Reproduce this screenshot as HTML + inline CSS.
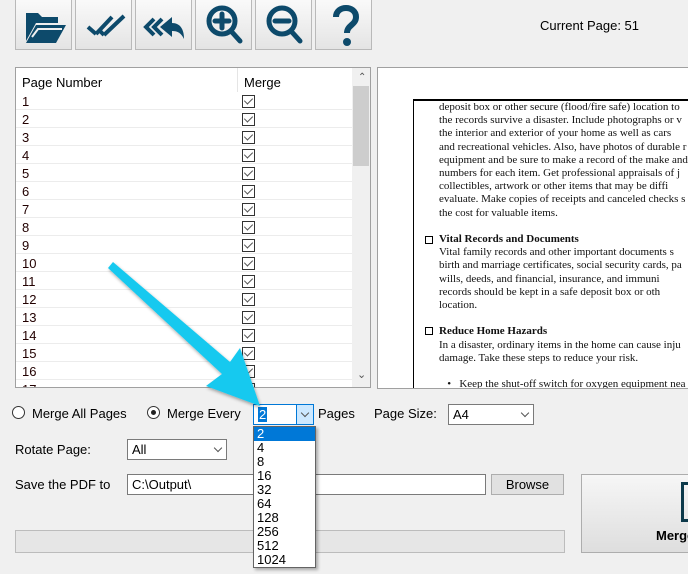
<!DOCTYPE html>
<html><head><style>
*{box-sizing:border-box;margin:0;padding:0}
body{width:688px;height:574px;overflow:hidden;background:#f0f0f0;font-family:"Liberation Sans",sans-serif;font-size:13px;color:#000;position:relative}
.a{position:absolute}
.tb{position:absolute;top:-2px;width:57px;height:52px;border:1px solid #b9b9b9;background:linear-gradient(#fafafa,#e4e4e4)}
.tb svg{position:absolute;left:6px;top:4px}
.list{left:15px;top:67px;width:356px;height:321px;background:#fff;border:1px solid #a0a0a0;overflow:hidden}
.row{position:absolute;left:0;width:336px;height:18px;border-bottom:1px solid #ececec;color:#200}
.row span{position:absolute;left:6px;top:2px}
.cb{position:absolute;left:226px;top:3px;width:13px;height:13px;border:1px solid #333;background:#fff}
.cb:after{content:"";position:absolute;left:3px;top:0px;width:4px;height:7px;border:solid #555;border-width:0 1.5px 1.5px 0;transform:rotate(45deg)}
.combo{position:absolute;height:21px;background:#fff;border:1px solid #7a7a7a;padding:2px 4px}
.chev{position:absolute;right:5px;top:5px;width:6px;height:6px;border:solid #555;border-width:0 1px 1px 0;transform:rotate(45deg)}
.doc{font-family:"Liberation Serif",serif;font-size:11px;line-height:13.2px;color:#111;white-space:nowrap}
.dd div{height:14px;padding-left:3px;line-height:14px;font-size:13px}
</style></head><body>
<div class="tb" style="left:15px"><svg width="46" height="44" viewBox="0 0 46 44"><path d="M4 10h12l4 4h16v6H14L4 38z" fill="#0d4a6b"/><path d="M14 22h30L34 40H4z" fill="#0d4a6b"/><path d="M10 34 L16 26 H40" stroke="#f0f0f0" stroke-width="2" fill="none"/></svg></div>
<div class="tb" style="left:75px"><svg width="46" height="44" viewBox="0 0 46 44"><path d="M6 24l8 7M14 31L30 14M16 26l6 6M22 32L42 13" stroke="#0d4a6b" stroke-width="4" fill="none"/></svg></div>
<div class="tb" style="left:135px"><svg width="46" height="44" viewBox="0 0 46 44"><path d="M12 16L4 24l8 8M20 16l-8 8 8 8" stroke="#0d4a6b" stroke-width="4" fill="none"/><path d="M30 14v6c8 0 12 6 12 16c-3-6-6-8-12-8v6l-12-10z" fill="#0d4a6b"/></svg></div>
<div class="tb" style="left:195px"><svg width="46" height="44" viewBox="0 0 46 44"><circle cx="20" cy="18" r="13" stroke="#0d4a6b" stroke-width="5" fill="none"/><path d="M29 28l9 10M20 11v14M13 18h14" stroke="#0d4a6b" stroke-width="5" stroke-linecap="round"/></svg></div>
<div class="tb" style="left:255px"><svg width="46" height="44" viewBox="0 0 46 44"><circle cx="20" cy="18" r="13" stroke="#0d4a6b" stroke-width="5" fill="none"/><path d="M29 28l9 10M13 18h14" stroke="#0d4a6b" stroke-width="5" stroke-linecap="round"/></svg></div>
<div class="tb" style="left:315px"><svg width="46" height="44" viewBox="0 0 46 44"><path d="M14 14c0-12 20-12 20 0c0 8-9 8-9 16" stroke="#0d4a6b" stroke-width="6" fill="none"/><circle cx="25" cy="39" r="4" fill="#0d4a6b"/></svg></div>
<div class="a" style="left:540px;top:18px">Current Page: 51</div>

<div class="a list">
<div class="a" style="left:6px;top:7px">Page Number</div>
<div class="a" style="left:221px;top:0;width:1px;height:24px;background:#e5e5e5"></div>
<div class="a" style="left:228px;top:7px">Merge</div>
<div class="a" style="left:336px;top:0;width:18px;height:320px;background:#f0f0f0"></div>
<div class="a" style="left:337px;top:18px;width:16px;height:80px;background:#cdcdcd"></div>
<div class="a" style="left:342px;top:4px;font-size:10px;color:#555">&#8963;</div>
<div class="a" style="left:341px;top:300px;font-size:11px;color:#555">&#8964;</div>
<div id="rows"></div>
</div>
<script>
var h='';for(var i=1;i<=17;i++){var t=24+(i-1)*18;h+='<div class="row" style="top:'+t+'px"><span>'+i+'</span><div class="cb"></div></div>';}
document.getElementById('rows').innerHTML=h;
</script>

<div class="a" style="left:377px;top:67px;width:315px;height:322px;background:#fff;border:1px solid #a0a0a0;overflow:hidden">
<div class="a" style="left:35px;top:31px;width:300px;height:300px;border-left:1px solid #000;border-top:2px solid #000"></div>
<div class="a doc" style="left:61px;top:33px">deposit box or other secure (flood/fire safe) location to<br>the records survive a disaster. Include photographs or v<br>the interior and exterior of your home as well as cars<br>and recreational vehicles. Also, have photos of durable r<br>equipment and be sure to make a record of the make and<br>numbers for each item. Get professional appraisals of j<br>collectibles, artwork or other items that may be diffi<br>evaluate. Make copies of receipts and canceled checks s<br>the cost for valuable items.<br><br><b>Vital Records and Documents</b><br>Vital family records and other important documents s<br>birth and marriage certificates, social security cards, pa<br>wills, deeds, and financial, insurance, and immuni<br>records should be kept in a safe deposit box or oth<br>location.<br><br><b>Reduce Home Hazards</b><br>In a disaster, ordinary items in the home can cause inju<br>damage. Take these steps to reduce your risk.<br><br>&nbsp;&nbsp;&nbsp;&bull;&nbsp;&nbsp;&nbsp;Keep the shut-off switch for oxygen equipment nea</div>
<div class="a" style="left:47px;top:168px;width:8px;height:8px;border:1.5px solid #000"></div>
<div class="a" style="left:47px;top:259px;width:8px;height:8px;border:1.5px solid #000"></div>
</div>

<div class="a" style="left:12px;top:406px;width:13px;height:13px;border:1px solid #333;border-radius:50%;background:#fff"></div>
<div class="a" style="left:32px;top:406px">Merge All Pages</div>
<div class="a" style="left:147px;top:406px;width:13px;height:13px;border:1px solid #333;border-radius:50%;background:#fff"><div class="a" style="left:3px;top:3px;width:5px;height:5px;border-radius:50%;background:#222"></div></div>
<div class="a" style="left:167px;top:406px">Merge Every</div>
<div class="combo" style="left:253px;top:404px;width:61px;border-color:#0078d7"><span style="background:#0078d7;color:#fff;padding:0 1px">2</span><div class="a" style="left:42px;top:0;width:17px;height:19px;background:#cce8ff;border-left:1px solid #0078d7"><div class="chev" style="right:5px"></div></div></div>
<div class="a" style="left:318px;top:406px">Pages</div>
<div class="a" style="left:374px;top:406px">Page Size:</div>
<div class="combo" style="left:448px;top:404px;width:86px">A4<div class="chev"></div></div>
<div class="a" style="left:15px;top:442px">Rotate Page:</div>
<div class="combo" style="left:127px;top:439px;width:100px">All<div class="chev"></div></div>
<div class="a" style="left:15px;top:477px">Save the PDF to</div>
<div class="combo" style="left:127px;top:474px;width:359px">C:\Output\</div>
<div class="a" style="left:491px;top:474px;width:73px;height:21px;border:1px solid #adadad;background:#e1e1e1;text-align:center;line-height:19px">Browse</div>
<div class="a" style="left:15px;top:530px;width:550px;height:23px;border:1px solid #bcbcbc;background:#e6e6e6"></div>
<div class="a" style="left:581px;top:474px;width:120px;height:79px;border:1px solid #adadad;background:linear-gradient(#f6f6f6,#dedede)"><div class="a" style="left:99px;top:7px;width:12px;height:40px;border:3px solid #0d3a4b;border-right:none"></div><div class="a" style="left:74px;top:53px;font-weight:bold">Merge</div></div>

<svg class="a" style="left:0;top:0" width="688" height="574"><defs><filter id="s"><feDropShadow dx="1" dy="2" stdDeviation="1.5" flood-opacity=".35"/></filter></defs>
<path d="M108 268 L113 262 L230 362 L240 348 L260 406 L206 386 L222 374 Z" fill="#17c9ef" filter="url(#s)"/></svg>

<div class="a dd" style="left:253px;top:426px;width:63px;height:142px;background:#fff;border:1px solid #646464;box-shadow:2px 2px 3px rgba(0,0,0,.3)">
<div style="background:#0078d7;color:#fff">2</div><div>4</div><div>8</div><div>16</div><div>32</div><div>64</div><div>128</div><div>256</div><div>512</div><div>1024</div></div>
</body></html>
